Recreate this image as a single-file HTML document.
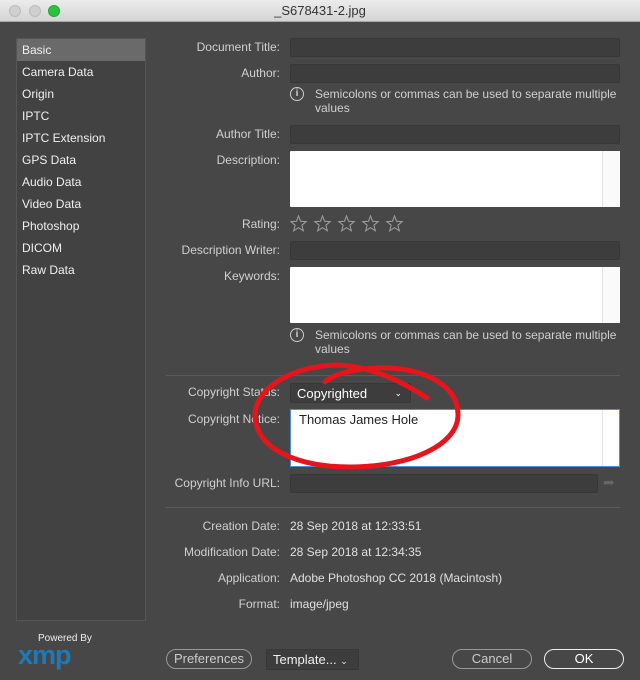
<!DOCTYPE html>
<html><head><style>
*{margin:0;padding:0;box-sizing:border-box}
body{width:640px;height:680px;background:#474747;font-family:"Liberation Sans",sans-serif;font-size:12px;color:#d8d8d8;position:relative;overflow:hidden}
.tb{position:absolute;left:0;top:0;width:640px;height:22px;background:linear-gradient(#ececec,#d4d4d4);border-bottom:1px solid #a8a8a8;text-align:center;color:#333;font-size:13px;line-height:22px}
.dot{position:absolute;top:5px;width:12px;height:12px;border-radius:50%;background:#cfcfcf;border:1px solid #bcbcbc}
.side{position:absolute;left:16px;top:38px;width:130px;height:583px;background:#424242;border:1px solid #555}
.side div{height:22px;line-height:22px;padding-left:5px;color:#f0f0f0}
.side .sel{background:#6a6a6a}
.l{position:absolute;right:360px;text-align:right;white-space:nowrap;color:#d0d0d0}
.in{position:absolute;left:290px;width:330px;height:19px;background:#3d3d3d;border:1px solid #383838;border-radius:2px}
.ta{position:absolute;left:290px;width:330px;background:#fff;border-radius:1px}
.ta:after{content:"";position:absolute;right:0;top:0;bottom:0;width:17px;border-left:1px solid #e5e5e5;background:#fafafa}
.info{position:absolute;left:290px;width:330px;color:#d0d0d0;padding-left:25px;line-height:14px}
.info i{position:absolute;left:0;top:0;width:14px;height:14px;border:1.3px solid #ccc;border-radius:50%;font-style:normal;font-size:10px;text-align:center;line-height:12px;font-weight:bold}
.v{position:absolute;left:290px;color:#e0e0e0}
.btn{position:absolute;top:649px;height:20px;border:1.5px solid #999;border-radius:10px;text-align:center;line-height:17px;font-size:13px;color:#ccc}
.hr{position:absolute;left:166px;width:454px;height:1px;background:#5a5a5a}
</style></head><body>
<div class="tb">_S678431-2.jpg</div>
<div class="dot" style="left:9px"></div><div class="dot" style="left:29px"></div><div class="dot" style="left:48px;background:#2ac33e;border-color:#22a834"></div>
<div class="side"><div class="sel">Basic</div><div>Camera Data</div><div>Origin</div><div>IPTC</div><div>IPTC Extension</div><div>GPS Data</div><div>Audio Data</div><div>Video Data</div><div>Photoshop</div><div>DICOM</div><div>Raw Data</div></div>

<div class="l" style="top:40px">Document Title:</div><div class="in" style="top:38px"></div>
<div class="l" style="top:66px">Author:</div><div class="in" style="top:64px"></div>
<div class="info" style="top:87px"><i>i</i>Semicolons or commas can be used to separate multiple values</div>
<div class="l" style="top:127px">Author Title:</div><div class="in" style="top:125px"></div>
<div class="l" style="top:153px">Description:</div><div class="ta" style="top:151px;height:56px"></div>
<div class="l" style="top:217px">Rating:</div>
<svg style="position:absolute;left:290px;top:215px" width="120" height="18">
<g fill="none" stroke="#9a9a9a" stroke-width="1.1">
<path id="s" d="M8.5 1 L10.6 6.3 L16.2 6.6 L11.9 10.2 L13.3 15.8 L8.5 12.7 L3.7 15.8 L5.1 10.2 L0.8 6.6 L6.4 6.3 Z"/>
<use href="#s" x="24"/><use href="#s" x="48"/><use href="#s" x="72"/><use href="#s" x="96"/>
</g></svg>
<div class="l" style="top:243px">Description Writer:</div><div class="in" style="top:241px"></div>
<div class="l" style="top:269px">Keywords:</div><div class="ta" style="top:267px;height:56px"></div>
<div class="info" style="top:328px"><i>i</i>Semicolons or commas can be used to separate multiple values</div>
<div class="hr" style="top:375px"></div>
<div class="l" style="top:385px">Copyright Status:</div>
<div style="position:absolute;left:290px;top:383px;width:121px;height:20px;background:#3d3d3d;border:1px solid #383838;border-radius:2px;color:#fff;font-size:13px;padding-left:6px;line-height:19px">Copyrighted<span style="position:absolute;right:8px;font-size:9px">⌄</span></div>
<div class="l" style="top:412px">Copyright Notice:</div>
<div style="position:absolute;left:290px;top:409px;width:330px;height:58px;background:#fff;border:1px solid #4a90e2;color:#222;font-size:13px;padding:2px 8px">Thomas James Hole<span style="position:absolute;right:0;top:0;bottom:0;width:17px;border-left:1px solid #e5e5e5"></span></div>
<div class="l" style="top:476px">Copyright Info URL:</div><div class="in" style="top:474px;width:308px"></div>
<div style="position:absolute;left:603px;top:474px;color:#666;font-size:14px">➦</div>
<div class="hr" style="top:507px"></div>
<div class="l" style="top:519px">Creation Date:</div><div class="v" style="top:519px">28 Sep 2018 at 12:33:51</div>
<div class="l" style="top:545px">Modification Date:</div><div class="v" style="top:545px">28 Sep 2018 at 12:34:35</div>
<div class="l" style="top:571px">Application:</div><div class="v" style="top:571px">Adobe Photoshop CC 2018 (Macintosh)</div>
<div class="l" style="top:597px">Format:</div><div class="v" style="top:597px">image/jpeg</div>
<svg style="position:absolute;left:240px;top:355px" width="230" height="125"><path d="M187 43 C160 25 130 12 100 10 C50 10 15 35 15 60 C15 95 60 112 110 112 C170 112 218 90 218 60 C218 30 185 15 150 13 C120 12 95 18 85 27" fill="none" stroke="#e8141b" stroke-width="5" stroke-linecap="round"/></svg>
<div style="position:absolute;left:38px;top:633px;font-size:10px;color:#eee">Powered By</div>
<div style="position:absolute;left:18px;top:640px;font-size:27px;font-weight:bold;color:#1d7ab8;letter-spacing:-1px">xmp</div>
<div class="btn" style="left:166px;width:86px">Preferences</div>
<div style="position:absolute;left:266px;top:649px;width:93px;height:21px;background:#3d3d3d;border:1px solid #383838;color:#f0f0f0;font-size:13px;line-height:20px;padding-left:6px">Template... <span style="font-size:9px">⌄</span></div>
<div class="btn" style="left:452px;width:80px">Cancel</div>
<div class="btn" style="left:544px;width:80px;border-color:#eee;color:#fff">OK</div>
</body></html>
